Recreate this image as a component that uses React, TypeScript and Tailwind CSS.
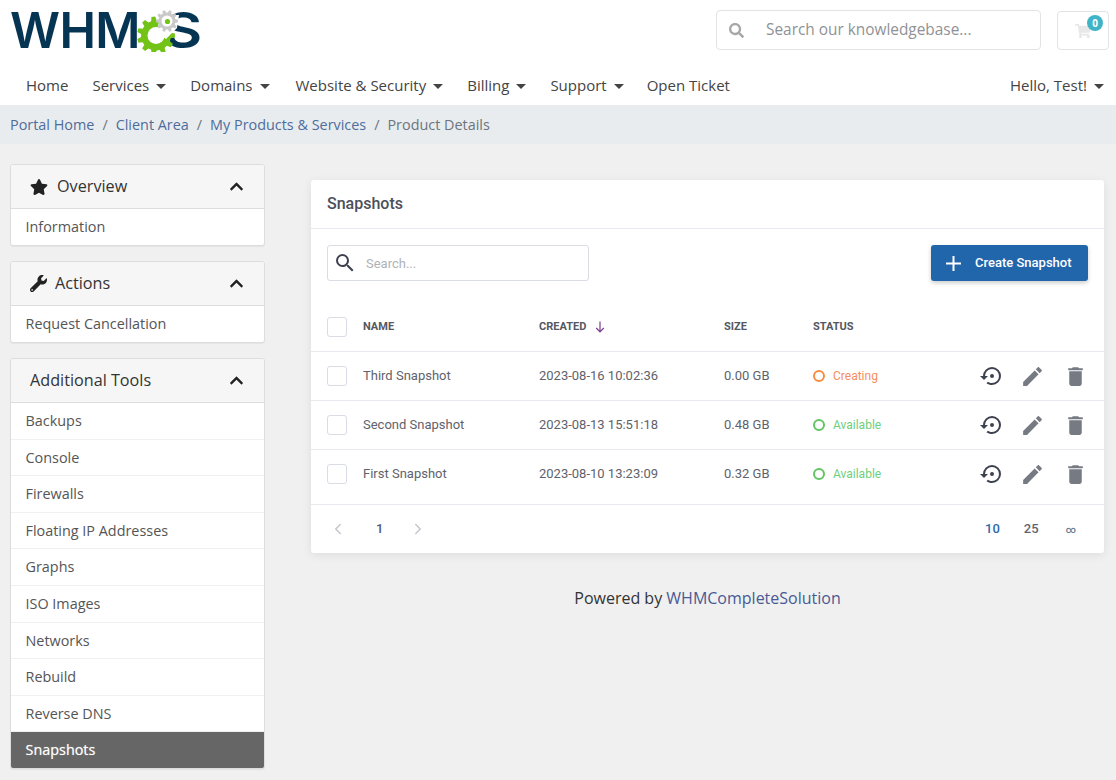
import { FaChevronUp, FaSearch, FaShoppingCart, FaStar, FaWrench } from 'react-icons/fa';
import { ChevronLeft, ChevronRight } from 'lucide-react';

const NAV = [
  { label: 'Home', caret: false, gap: 'mr-[24px]' },
  { label: 'Services', caret: true, gap: 'mr-[24px]' },
  { label: 'Domains', caret: true, gap: 'mr-[26px]' },
  { label: 'Website & Security', caret: true, gap: 'mr-[24px]' },
  { label: 'Billing', caret: true, gap: 'mr-[24px]' },
  { label: 'Support', caret: true, gap: 'mr-[23px]' },
  { label: 'Open Ticket', caret: false, gap: 'mr-[24px]' },
];

const TOOLS = [
  'Backups',
  'Console',
  'Firewalls',
  'Floating IP Addresses',
  'Graphs',
  'ISO Images',
  'Networks',
  'Rebuild',
  'Reverse DNS',
];

const SNAPSHOTS = [
  { name: 'Third Snapshot', created: '2023-08-16 10:02:36', size: '0.00 GB', status: 'Creating' },
  { name: 'Second Snapshot', created: '2023-08-13 15:51:18', size: '0.48 GB', status: 'Available' },
  { name: 'First Snapshot', created: '2023-08-10 13:23:09', size: '0.32 GB', status: 'Available' },
];

function gearPath(cx: number, cy: number, outer: number, inner: number, teeth: number) {
  const pts: string[] = [];
  const step = (Math.PI * 2) / teeth;
  for (let i = 0; i < teeth; i++) {
    const a = i * step;
    const add = (r: number, t: number) =>
      pts.push(`${(cx + r * Math.cos(a + t * step)).toFixed(2)},${(cy + r * Math.sin(a + t * step)).toFixed(2)}`);
    add(inner, -0.32);
    add(outer, -0.18);
    add(outer, 0.18);
    add(inner, 0.32);
  }
  return `M${pts.join('L')}Z`;
}

function Logo() {
  return (
    <div className="relative w-[205px] h-[50px] font-['Inter',sans-serif] font-semibold text-[#063554]">
      <span className="absolute left-[10px] top-[0px] text-[49px] leading-[50px] tracking-[-0.6px]">WHM</span>
      <span className="absolute left-[164px] top-[0px] text-[49px] leading-[50px] origin-left scale-x-[1.2]">S</span>
      <svg className="absolute left-[130px] top-[0px]" width="50" height="46" viewBox="0 0 50 46">
        <path d={gearPath(26, 29.5, 19, 15, 11)} fill="#72c316" />
        <circle cx="26" cy="29.5" r="8.5" fill="#fff" />
        <path d="M27 27 L30 9 L49 9 L47 22 L36 33 Z" fill="#fff" />
        <path d={gearPath(37, 15, 11, 8.5, 10)} fill="#c9c9c9" />
        <circle cx="37" cy="15" r="5.5" fill="#fff" />
        <circle cx="37.5" cy="15.5" r="2.6" fill="#72c316" />
      </svg>
    </div>
  );
}

function Caret() {
  return <span className="inline-block ml-[7px] w-0 h-0 align-middle border-x-[5px] border-x-transparent border-t-[5px] border-t-[#444]" />;
}

function SidePanel({
  title,
  icon,
  children,
}: {
  title: string;
  icon?: React.ReactNode;
  children: React.ReactNode;
}) {
  return (
    <div className="mb-[15.4px] bg-white border border-[#ddd] rounded-[3px] overflow-hidden shadow-[0_1px_1px_rgba(0,0,0,0.05)]">
      <div className="h-[43px] flex items-center bg-[#f6f6f6] pl-[19px] pr-[20px] text-[16.2px] text-[#333]">
        {icon}
        <span>{title}</span>
        <FaChevronUp className="ml-auto text-[#222]" size={15} />
      </div>
      {children}
    </div>
  );
}

function SideItem({ label, active, first }: { label: string; active?: boolean; first?: boolean }) {
  return (
    <div
      className={`h-[36.6px] flex items-center pl-[14.5px] text-[14.4px] border-t ${
        first ? 'border-[#ddd]' : 'border-[#f0f0f0]'
      } ${active ? 'bg-[#666] text-white border-[#666] [text-shadow:0_0_1px_rgba(255,255,255,0.6)]' : 'text-[#555]'}`}
    >
      {label}
    </div>
  );
}

function RestoreIcon() {
  return (
    <svg width="24" height="24" viewBox="0 0 24 24" fill="#3d4250">
      <path d="M12,3A9,9 0 0,0 3,12H0L4,16L8,12H5A7,7 0 0,1 12,5A7,7 0 0,1 19,12A7,7 0 0,1 12,19C10.5,19 9.09,18.5 7.94,17.7L6.5,19.14C8.04,20.3 9.94,21 12,21A9,9 0 0,0 21,12A9,9 0 0,0 12,3M14,12A2,2 0 0,0 12,10A2,2 0 0,0 10,12A2,2 0 0,0 12,14A2,2 0 0,0 14,12Z" />
    </svg>
  );
}

function PencilIcon() {
  return (
    <svg width="25" height="25" viewBox="0 0 24 24" fill="#767a82">
      <path d="M20.71,7.04C21.1,6.65 21.1,6 20.71,5.63L18.37,3.29C18,2.9 17.35,2.9 16.96,3.29L15.12,5.12L18.87,8.87M3,17.25V21H6.75L17.81,9.93L14.06,6.18L3,17.25Z" />
    </svg>
  );
}

function TrashIcon() {
  return (
    <svg width="25" height="25" viewBox="0 0 24 24" fill="#767a82">
      <path d="M19,4H15.5L14.5,3H9.5L8.5,4H5V6H19M6,19A2,2 0 0,0 8,21H16A2,2 0 0,0 18,19V7H6V19Z" />
    </svg>
  );
}

function Checkbox() {
  return <span className="block w-[20px] h-[20px] rounded-[3px] border border-[#d9dbe5] bg-white" />;
}

const ROW = 'grid grid-cols-[36px_176px_185px_89px_1fr] items-center px-[16px]';

export default function App() {
  return (
    <div className="h-[780px] overflow-hidden bg-[#f0f0f0] font-['Open_Sans',sans-serif]">
      <header className="bg-white">
        <div className="h-[68px] flex items-start pr-[7px]">
          <div className="pt-[6px]">
            <Logo />
          </div>
          <div className="ml-auto mt-[10px] w-[325px] h-[40px] flex items-center border border-[#e3e3e3] rounded-[4px] pl-[12px]">
            <FaSearch className="text-[#a8a8a8]" size={15} />
            <span className="ml-[22px] text-[15.4px] text-[#8f9296]">Search our knowledgebase...</span>
          </div>
          <div className="relative ml-[16px] mt-[11px] w-[52px] h-[39px] flex items-center justify-center border border-[#e3e3e3] rounded-[4px]">
            <FaShoppingCart className="text-[#e8e8e8]" size={16} />
            <span className="absolute right-[5px] top-[3px] w-[16px] h-[16px] rounded-full bg-[#3fb4c6] text-white text-[10px] font-bold flex items-center justify-center">
              0
            </span>
          </div>
        </div>
        <nav className="h-[37px] flex items-center pb-[3px] pl-[26px] pr-[12px] text-[15px] text-[#444]">
          {NAV.map((n) => (
            <span key={n.label} className={`${n.gap} whitespace-nowrap`}>
              {n.label}
              {n.caret && <Caret />}
            </span>
          ))}
          <span className="ml-auto whitespace-nowrap">
            Hello, Test!
            <Caret />
          </span>
        </nav>
      </header>

      <div className="h-[39px] flex items-center bg-[#e9ecef] pl-[10px] text-[14.4px] text-[#6c757d]">
        <span className="text-[#4e6c9b]">Portal Home</span>
        <span className="px-[8px]">/</span>
        <span className="text-[#4e6c9b]">Client Area</span>
        <span className="px-[8px]">/</span>
        <span className="text-[#4e6c9b]">My Products &amp; Services</span>
        <span className="px-[8px]">/</span>
        <span>Product Details</span>
      </div>

      <div className="flex pl-[10px] pt-[20px]">
        <aside className="w-[255px] shrink-0">
          <SidePanel title="Overview" icon={<FaStar className="mr-[9px] text-[#222]" size={18} />}>
            <SideItem label="Information" first />
          </SidePanel>
          <SidePanel title="Actions" icon={<FaWrench className="mr-[8px] text-[#222]" size={17} />}>
            <SideItem label="Request Cancellation" first />
          </SidePanel>
          <SidePanel title="Additional Tools">
            {TOOLS.map((t, i) => (
              <SideItem key={t} label={t} first={i === 0} />
            ))}
            <SideItem label="Snapshots" active />
          </SidePanel>
        </aside>

        <main className="ml-[46px] w-[793px] pt-[16px] font-['Roboto',sans-serif]">
          <div className="bg-white rounded-[3px] shadow-[0_2px_10px_rgba(0,0,0,0.08)]">
            <div className="h-[49px] flex items-center px-[16px] border-b border-[#e8e8ef] text-[16px] font-medium text-[#4c4f5a]">
              Snapshots
            </div>
            <div className="h-[73px] flex items-start pt-[16px] px-[16px]">
              <div className="w-[262px] h-[36px] flex items-center border border-[#d9dbe5] rounded-[3px] pl-[5px]">
                <svg width="24" height="24" viewBox="0 0 24 24" fill="#3d4250">
                  <path d="M9.5,3A6.5,6.5 0 0,1 16,9.5C16,11.11 15.41,12.59 14.44,13.73L14.71,14H15.5L20.5,19L19,20.5L14,15.5V14.71L13.73,14.44C12.59,15.41 11.11,16 9.5,16A6.5,6.5 0 0,1 3,9.5A6.5,6.5 0 0,1 9.5,3M9.5,5C7,5 5,7 5,9.5C5,12 7,14 9.5,14C12,14 14,12 14,9.5C14,7 12,5 9.5,5Z" />
                </svg>
                <span className="ml-[9px] pt-[1px] text-[13px] text-[#b0b2b8]">Search...</span>
              </div>
              <button className="ml-auto w-[157px] h-[36px] flex items-center bg-[#2166ab] rounded-[3px] text-white text-[13px] font-medium shadow-[0_2px_4px_rgba(0,0,0,0.2)] pl-[15px]">
                <svg width="15" height="15" viewBox="0 0 15 15" stroke="#fff" strokeWidth="2">
                  <path d="M7.5 0V15M0 7.5H15" />
                </svg>
                <span className="ml-[14px]">Create Snapshot</span>
              </button>
            </div>

            <div className={`${ROW} h-[50px] pt-[1px] border-b border-[#e8e8ef] text-[11px] font-bold text-[#55585f]`}>
              <Checkbox />
              <span>NAME</span>
              <span className="flex items-center">
                CREATED
                <svg className="ml-[9px]" width="10" height="12" viewBox="0 0 10 12" fill="none" stroke="#7b3f8f" strokeWidth="1.2">
                  <path d="M5 0.5V11M1.2 7L5 11L8.8 7" />
                </svg>
              </span>
              <span>SIZE</span>
              <span>STATUS</span>
            </div>

            {SNAPSHOTS.map((s, i) => (
              <div
                key={s.name}
                className={`${ROW} border-b border-[#e8e8ef] text-[13px] text-[#5f626b] ${
                  i === 2 ? 'h-[55px] pb-[6px]' : 'h-[49px]'
                }`}
              >
                <Checkbox />
                <span>{s.name}</span>
                <span>{s.created}</span>
                <span>{s.size}</span>
                <span className="flex items-center">
                  <span
                    className={`w-[12px] h-[12px] rounded-full border-2 ${
                      s.status === 'Creating' ? 'border-[#f58d42]' : 'border-[#62c462]'
                    }`}
                  />
                  <span className={`ml-[8px] text-[12px] ${s.status === 'Creating' ? 'text-[#f58d5c]' : 'text-[#6fcf7a]'}`}>
                    {s.status}
                  </span>
                  <span className="ml-auto flex items-center">
                    <RestoreIcon />
                    <span className="ml-[16px]">
                      <PencilIcon />
                    </span>
                    <span className="ml-[18px]">
                      <TrashIcon />
                    </span>
                  </span>
                </span>
              </div>
            ))}

            <div className="h-[48px] flex items-center px-[16px] text-[13px] font-medium text-[#62656e]">
              <ChevronLeft className="ml-[2px] text-[#c4c6cc]" size={18} strokeWidth={2} />
              <span className="ml-[29px] text-[#4e5a80]">1</span>
              <ChevronRight className="ml-[26px] text-[#c4c6cc]" size={18} strokeWidth={2} />
              <span className="ml-auto text-[#2f6aa8]">10</span>
              <span className="ml-[24px]">25</span>
              <span className="ml-[27px] mr-[12px] text-[10px] text-[#6b7a90]">∞</span>
            </div>
          </div>

          <p className="mt-[33px] text-center text-[16px] text-[#333] font-['Open_Sans',sans-serif]">
            Powered by <span className="text-[#4a5a94]">WHMCompleteSolution</span>
          </p>
        </main>
      </div>
    </div>
  );
}
